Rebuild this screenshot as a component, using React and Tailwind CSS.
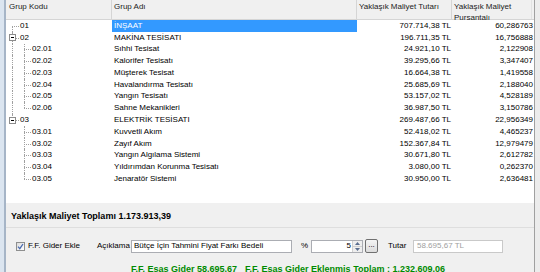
import React from "react";

const rows = [
  { code: "01", name: "İNŞAAT", tutar: "707.714,38 TL", pct: "60,286763", level: 0, v0: "down", selected: true },
  { code: "02", name: "MAKİNA TESİSATI", tutar: "196.711,35 TL", pct: "16,756888", level: 0, v0: "full", box: true },
  { code: "02.01", name: "Sıhhi Tesisat", tutar: "24.921,10 TL", pct: "2,122908", level: 1, v0: "full", v1: "full" },
  { code: "02.02", name: "Kalorifer Tesisatı", tutar: "39.295,66 TL", pct: "3,347407", level: 1, v0: "full", v1: "full" },
  { code: "02.03", name: "Müşterek Tesisat", tutar: "16.664,38 TL", pct: "1,419558", level: 1, v0: "full", v1: "full" },
  { code: "02.04", name: "Havalandırma Tesisatı", tutar: "25.685,69 TL", pct: "2,188040", level: 1, v0: "full", v1: "full" },
  { code: "02.05", name: "Yangın Tesisatı", tutar: "53.157,02 TL", pct: "4,528189", level: 1, v0: "full", v1: "full" },
  { code: "02.06", name: "Sahne Mekanikleri", tutar: "36.987,50 TL", pct: "3,150786", level: 1, v0: "full", v1: "up" },
  { code: "03", name: "ELEKTRİK TESİSATI", tutar: "269.487,66 TL", pct: "22,956349", level: 0, v0: "up", box: true },
  { code: "03.01", name: "Kuvvetli Akım", tutar: "52.418,02 TL", pct: "4,465237", level: 1, v1: "full" },
  { code: "03.02", name: "Zayıf Akım", tutar: "152.367,84 TL", pct: "12,979479", level: 1, v1: "full" },
  { code: "03.03", name: "Yangın Algılama Sistemi", tutar: "30.671,80 TL", pct: "2,612782", level: 1, v1: "full" },
  { code: "03.04", name: "Yıldırımdan Korunma Tesisatı", tutar: "3.080,00 TL", pct: "0,262370", level: 1, v1: "full" },
  { code: "03.05", name: "Jenaratör Sistemi", tutar: "30.950,00 TL", pct: "2,636481", level: 1, v1: "up" },
];

const vClass = {
  full: "top-0 bottom-0",
  down: "top-1/2 bottom-0",
  up: "top-0 bottom-1/2",
};

const TreeCell = ({ row }) => {
  return (
    <div className="relative h-full w-[106px] shrink-0">
      {row.v0 && (
        <span className={`absolute left-[6px] border-l border-dotted border-[#a0a0a0] ${vClass[row.v0]}`} />
      )}
      {row.v1 && (
        <span className={`absolute left-[18px] border-l border-dotted border-[#a0a0a0] ${vClass[row.v1]}`} />
      )}
      {row.level === 0 ? (
        <span className="absolute left-[6px] top-1/2 w-[7px] border-t border-dotted border-[#a0a0a0]" />
      ) : (
        <span className="absolute left-[18px] top-1/2 w-[7px] border-t border-dotted border-[#a0a0a0]" />
      )}
      {row.box && (
        <span className="absolute left-[3px] top-[2.5px] flex h-[7px] w-[7px] items-center justify-center border border-[#8c8c8c] bg-white">
          <span className="h-px w-[3px] bg-black" />
        </span>
      )}
      <span
        className={`absolute top-0 flex h-full items-center ${row.level === 0 ? "left-[14px]" : "left-[26px]"}`}
      >
        {row.code}
      </span>
    </div>
  );
};

const Checkbox = () => (
  <span className="flex h-[9px] w-[9px] shrink-0 items-center justify-center border border-[#8e8f8f] bg-gradient-to-br from-[#dcdcdc] to-[#ffffff]">
    <svg width="7" height="7" viewBox="0 0 7 7">
      <path d="M1 3.6 L2.8 5.6 L6 1" fill="none" stroke="#4a6bb0" strokeWidth="1.3" />
    </svg>
  </span>
);

const Spinner = () => (
  <div className="flex h-full w-[10px] shrink-0 flex-col border-l border-[#d0d0d0]">
    <div className="flex flex-1 items-center justify-center border-b border-[#d0d0d0] bg-[#eeeeee]">
      <svg width="5" height="3" viewBox="0 0 5 3">
        <path d="M0 3 L2.5 0 L5 3 Z" fill="#5a6e8f" />
      </svg>
    </div>
    <div className="flex flex-1 items-center justify-center bg-[#eeeeee]">
      <svg width="5" height="3" viewBox="0 0 5 3">
        <path d="M0 0 L2.5 3 L5 0 Z" fill="#5a6e8f" />
      </svg>
    </div>
  </div>
);

export default function App() {
  return (
    <div className="flex h-[272px] w-[540px] overflow-hidden bg-white font-['Liberation_Sans',Arial,sans-serif] text-[8px] text-black">
      <div className="w-[4px] shrink-0 bg-[#dbe5f0]" />
      <div className="w-[2px] shrink-0 bg-[#a6b5c7]" />

      <div className="flex min-w-0 flex-1 flex-col">
        {/* header */}
        <div className="flex h-[20px] shrink-0 border-b border-[#d5d5d5] bg-[#f0f0f0] leading-[11px] text-[#222]">
          <div className="w-[106px] shrink-0 border-r border-[#d5d5d5] px-[3px] pt-[1px]">Grup Kodu</div>
          <div className="w-[245px] shrink-0 border-r border-[#d5d5d5] px-[2px] pt-[1px]">Grup Adı</div>
          <div className="w-[95px] shrink-0 border-r border-[#d5d5d5] px-[2px] pt-[1px]">Yaklaşık Maliyet Tutarı</div>
          <div className="w-[80px] shrink-0 border-r border-[#e2e2e2] px-[2px] pt-[1px]">
            Yaklaşık Maliyet
            <br />
            Pursantajı
          </div>
        </div>

        {/* tree */}
        <div className="flex flex-1 flex-col bg-white">
          {rows.map((row) => (
            <div key={row.code} className="flex h-[11.77px] shrink-0 leading-none">
              <TreeCell row={row} />
              <div
                className={`flex w-[245px] shrink-0 items-center px-[2px] ${
                  row.selected ? "bg-[#3399ff] text-white" : ""
                }`}
              >
                {row.name}
              </div>
              <div className="flex w-[95px] shrink-0 items-center justify-end pr-[1px]">{row.tutar}</div>
              <div className="flex w-[82px] shrink-0 items-center justify-end pr-[1px]">{row.pct}</div>
            </div>
          ))}
        </div>

        {/* bottom panel */}
        <div className="flex h-[69px] shrink-0 flex-col bg-[#f0f0f0]">
          <div className="flex h-[25px] shrink-0 items-center border-b border-[#dedede] pl-[5px] pt-[3px] text-[9px] font-bold">
            Yaklaşık Maliyet Toplamı 1.173.913,39
          </div>
          <div className="flex h-[33px] shrink-0 items-center pl-[10px] pt-[3px]">
            <div className="flex w-[81px] shrink-0 items-center gap-[3px]">
              <Checkbox />
              <span>F.F. Gider Ekle</span>
            </div>
            <span className="w-[34px] shrink-0">Açıklama</span>
            <div className="flex h-[13px] w-[161px] shrink-0 items-center border border-[#abadb3] bg-white px-[2px]">
              Bütçe İçin Tahmini Fiyat Farkı Bedeli
            </div>
            <span className="ml-[9px] w-[10px] shrink-0">%</span>
            <div className="flex h-[13px] w-[52px] shrink-0 items-center border border-[#abadb3] bg-white">
              <span className="flex-1 pr-[1px] text-right">5</span>
              <Spinner />
            </div>
            <button className="ml-[2px] flex h-[14px] w-[13px] shrink-0 items-center justify-center rounded-[2px] border border-[#707070] bg-gradient-to-b from-[#f4f4f4] to-[#dcdcdc] pb-[3px] text-[8px] leading-none">
              ...
            </button>
            <span className="ml-[10px] w-[25px] shrink-0">Tutar</span>
            <div className="flex h-[13px] w-[90px] shrink-0 items-center border border-[#c9c9c9] bg-white px-[3px] text-[#a0a0a0]">
              58.695,67 TL
            </div>
          </div>
          <div className="flex shrink-0 pl-[125px] pt-[4px] text-[9px] font-bold leading-none text-[#008a00]">
            <span>F.F. Esas Gider 58.695,67</span>
            <span className="ml-[8px]">F.F. Esas Gider Eklenmiş Toplam : 1.232.609,06</span>
          </div>
        </div>
      </div>

      <div className="w-px shrink-0 bg-[#a0a0a0]" />
      <div className="w-[5px] shrink-0 bg-[#ececec]" />
    </div>
  );
}
